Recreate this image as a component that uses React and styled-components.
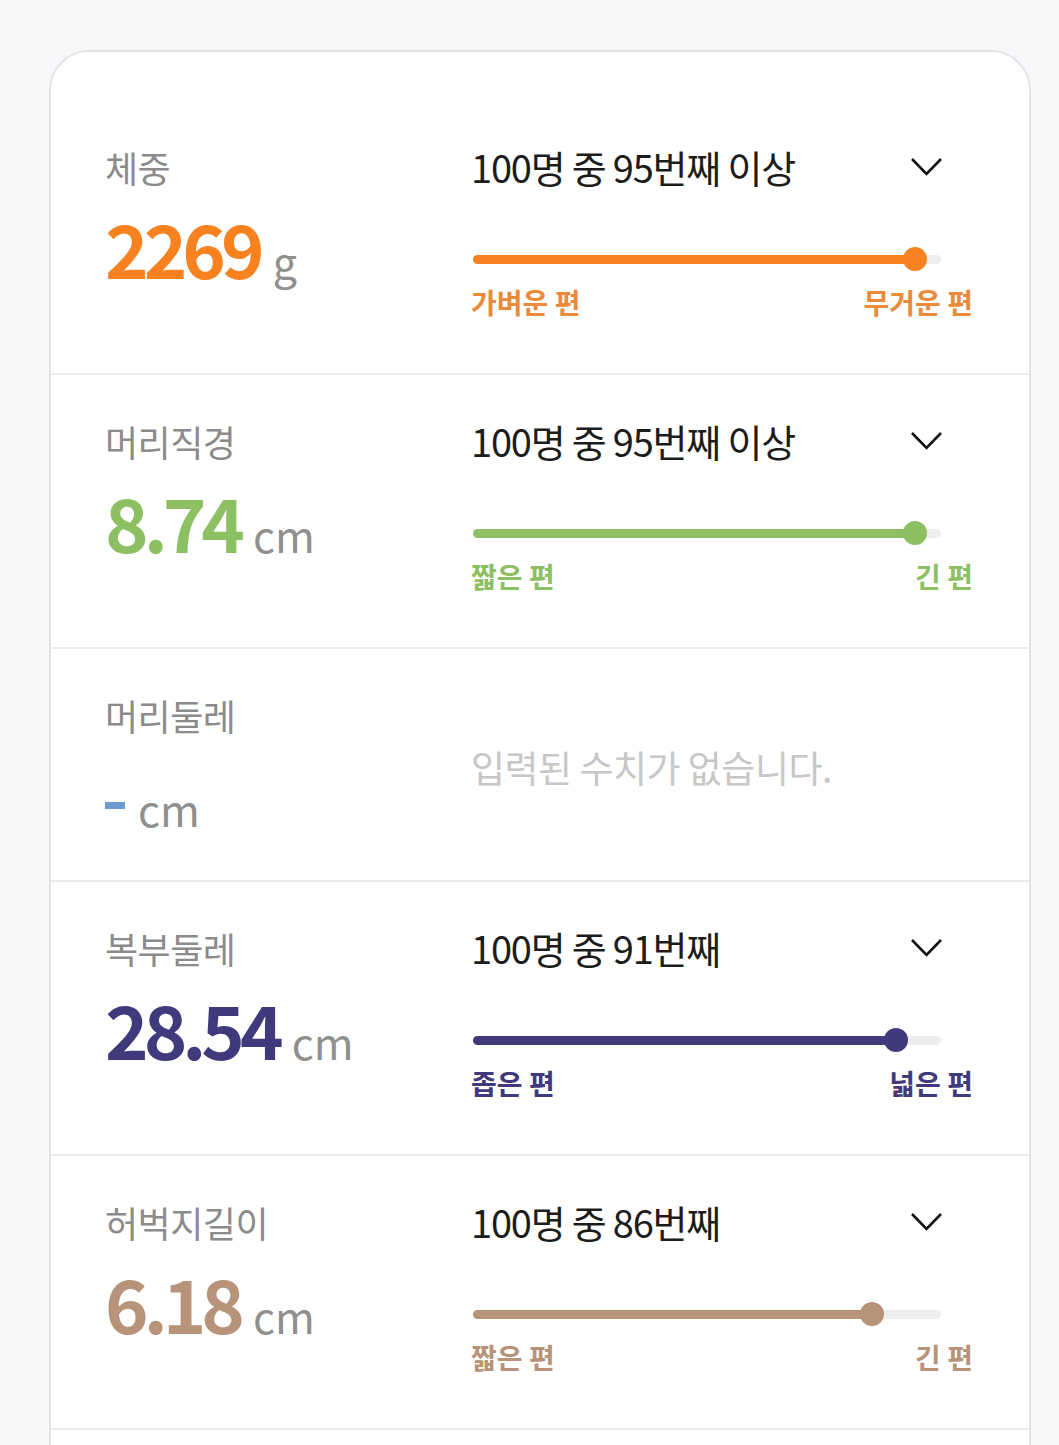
import React from 'react';
import styled, { createGlobalStyle } from 'styled-components';

const Global = createGlobalStyle`
  body {
    margin: 0;
    background: #f7f8fa;
    font-family: "Noto Sans CJK KR", "Noto Sans", sans-serif;
  }
`;

const Page = styled.div`
  padding: 50px 0 60px 49px;
`;

const Card = styled.div`
  width: 982px;
  box-sizing: border-box;
  background: #fff;
  border: 2px solid #e3e5e8;
  border-radius: 40px;
  padding-top: 49px;
  overflow: hidden;
`;

const Row = styled.div`
  display: grid;
  grid-template-columns: 366px 502px;
  padding: 44px 54px 40px;
  border-bottom: 2px solid #ebebeb;
`;

const Left = styled.div`
  display: flex;
  flex-direction: column;
`;

const Label = styled.div`
  font-size: 36px;
  line-height: 44px;
  color: #8b8b8b;
  letter-spacing: -0.5px;
`;

const ValueLine = styled.div`
  display: flex;
  align-items: baseline;
  margin: 18px 0 5px;
  height: 80px;
  line-height: 80px;
`;

const Value = styled.span`
  font-size: 74px;
  font-weight: 700;
  letter-spacing: -5px;
  color: ${p => p.color};
`;

const Dash = styled.span`
  display: inline-block;
  width: 20px;
  height: 7px;
  margin-bottom: 18px;
  background: #6f9bd0;
`;

const Unit = styled.span`
  font-size: 43px;
  color: #8f8f8f;
  margin-left: 13px;
`;

const Right = styled.div`
  display: flex;
  flex-direction: column;
`;

const Header = styled.div`
  display: flex;
  align-items: center;
  justify-content: space-between;
  padding-right: 30px;
  height: 44px;
`;

const Rank = styled.div`
  font-size: 38px;
  line-height: 44px;
  color: #1c1c1c;
  letter-spacing: -1.2px;
`;

const Track = styled.div`
  position: relative;
  margin-top: 58px;
  margin-left: 2px;
  width: 468px;
  height: 24px;
  display: flex;
  align-items: center;
  &::before {
    content: '';
    position: absolute;
    left: 0;
    right: 0;
    height: 9px;
    border-radius: 5px;
    background: #eeeeee;
  }
`;

const Fill = styled.div`
  position: relative;
  height: 9px;
  border-radius: 5px;
  background: ${p => p.color};
`;

const Thumb = styled.div`
  position: absolute;
  top: 0;
  width: 24px;
  height: 24px;
  margin-left: -12px;
  border-radius: 50%;
  background: ${p => p.color};
`;

const Ends = styled.div`
  display: flex;
  justify-content: space-between;
  margin: 14px 0;
  font-size: 28px;
  line-height: 34px;
  font-weight: 700;
  color: ${p => p.color};
`;

const Empty = styled.div`
  align-self: center;
  font-size: 37px;
  color: #c7c7c7;
  letter-spacing: -0.5px;
`;

const Chevron = () => (
  <svg width="33" height="20" viewBox="0 0 33 20">
    <polyline points="2,2 16.5,17 31,2" fill="none" stroke="#111" strokeWidth="2.6" />
  </svg>
);

const rows = [
  { label: '체중', value: '2269', unit: 'g', color: '#f7821f', endColor: '#ea8a3a', rank: '100명 중 95번째 이상', pct: 94.4, lo: '가벼운 편', hi: '무거운 편' },
  { label: '머리직경', value: '8.74', unit: 'cm', color: '#8cc063', endColor: '#8cc063', rank: '100명 중 95번째 이상', pct: 94.4, lo: '짧은 편', hi: '긴 편' },
  { label: '머리둘레', empty: true, unit: 'cm', color: '#6f9bd0' },
  { label: '복부둘레', value: '28.54', unit: 'cm', color: '#403a7c', endColor: '#403a7c', rank: '100명 중 91번째', pct: 90.4, lo: '좁은 편', hi: '넓은 편' },
  { label: '허벅지길이', value: '6.18', unit: 'cm', color: '#b69379', endColor: '#b69379', rank: '100명 중 86번째', pct: 85.3, lo: '짧은 편', hi: '긴 편' },
  { label: '키', value: '48.2', unit: 'cm', color: '#f7821f', endColor: '#ea8a3a', rank: '100명 중 50번째', pct: 50, lo: '작은 편', hi: '큰 편' },
];

export default function App() {
  return (
    <Page>
      <Global />
      <Card>
        {rows.map(r => (
          <Row key={r.label}>
            <Left>
              <Label>{r.label}</Label>
              <ValueLine>
                <Value color={r.color}>{r.empty ? <Dash /> : r.value}</Value>
                <Unit>{r.unit}</Unit>
              </ValueLine>
            </Left>
            {r.empty ? (
              <Empty>입력된 수치가 없습니다.</Empty>
            ) : (
              <Right>
                <Header>
                  <Rank>{r.rank}</Rank>
                  <Chevron />
                </Header>
                <Track>
                  <Fill color={r.color} style={{ width: `${r.pct}%` }} />
                  <Thumb color={r.color} style={{ left: `${r.pct}%` }} />
                </Track>
                <Ends color={r.endColor}>
                  <span>{r.lo}</span>
                  <span>{r.hi}</span>
                </Ends>
              </Right>
            )}
          </Row>
        ))}
      </Card>
    </Page>
  );
}
